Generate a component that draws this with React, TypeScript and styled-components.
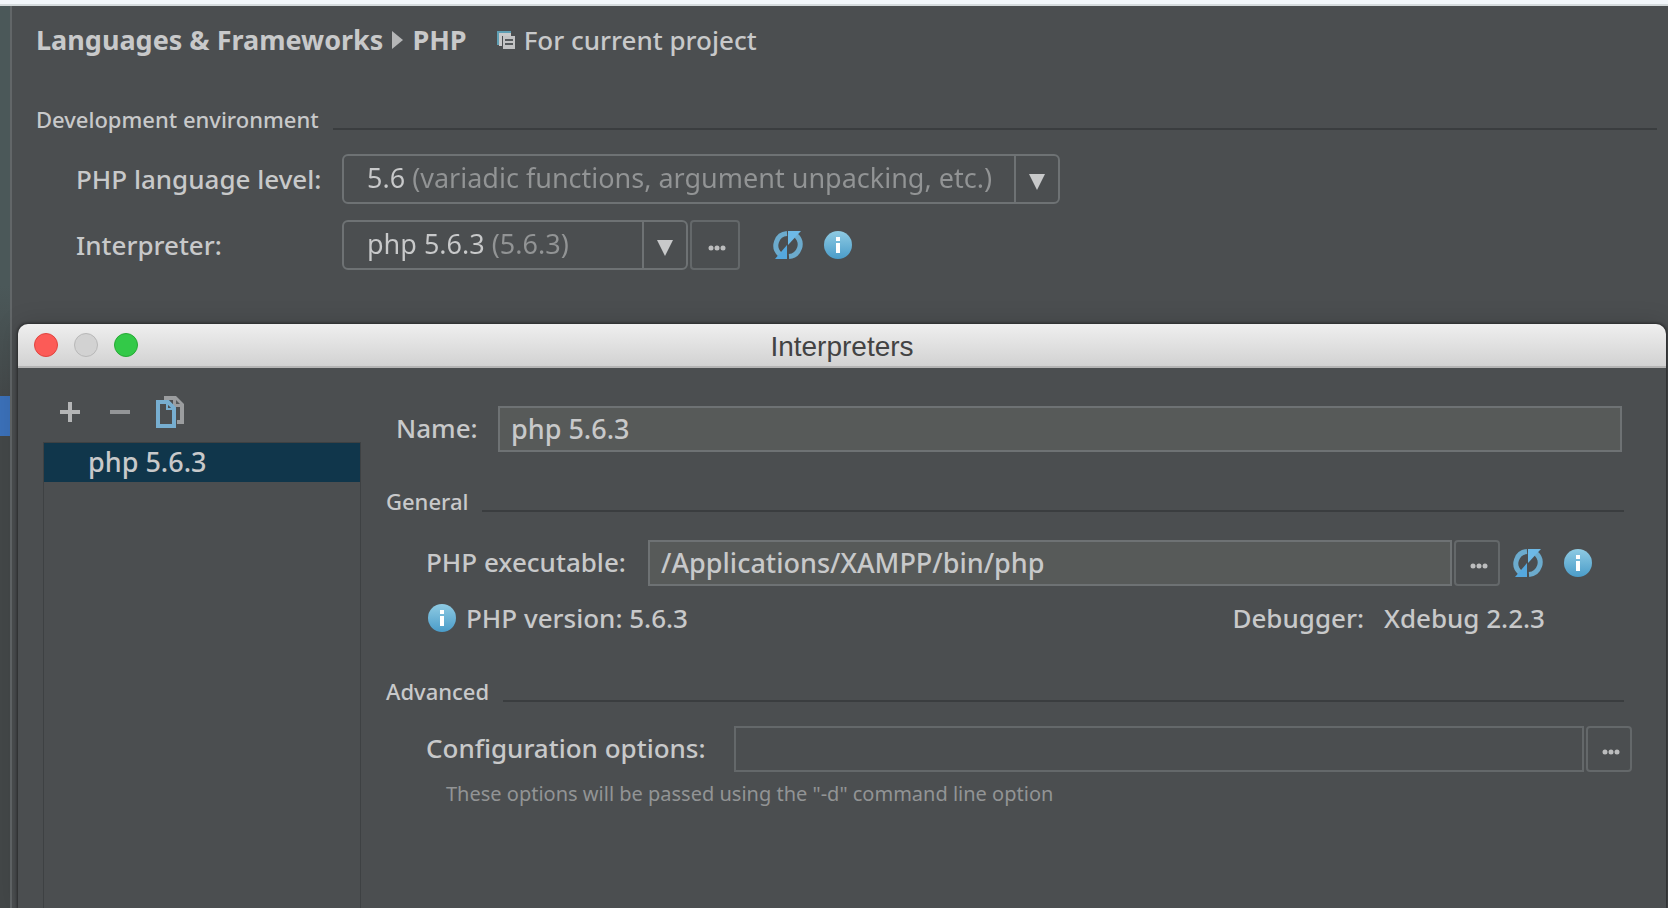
import React, { useId } from "react";
import styled, { createGlobalStyle } from "styled-components";

const color = {
  panel: "#4b4e50",
  text: "#c8c9ca",
  muted: "#929495",
  border: "#6e7274",
  dimBorder: "#64686a",
  field: "#575a59",
  rule: "#3a3d3f",
};

const GlobalStyle = createGlobalStyle`
  *, *::before, *::after { box-sizing: border-box; }
  body {
    margin: 0;
    background: ${color.panel};
    color: ${color.text};
    font-family: "Noto Sans", "Open Sans", sans-serif;
    font-size: 26px;
    font-weight: 500;
    line-height: 36px;
  }
  button, input, select { font: inherit; color: inherit; margin: 0; }
`;

const Page = styled.div`
  display: flex;
  flex-direction: column;
  min-height: 100vh;
  overflow: hidden;
`;

const TopEdge = styled.div`
  flex: none;
  height: 6px;
  background: #f2f6fa;
  border-bottom: 2px solid #d4dadc;
`;

const Body = styled.div`
  display: flex;
  flex: 1;
`;

const Sidebar = styled.div`
  flex: none;
  width: 12px;
  padding-top: 390px;
  background: linear-gradient(#4b5859 0, #4b5859 280px, #434748 400px, #434748);
  border-right: 2px solid #626668;
`;

const SidebarSelection = styled.div`
  height: 40px;
  background: #3b70b8;
`;

const Main = styled.main`
  display: flex;
  flex: 1;
  flex-direction: column;
  min-width: 0;
`;

const Settings = styled.section`
  padding: 15px 11px 54px 24px;
`;

const Breadcrumb = styled.header`
  display: flex;
  align-items: center;
  height: 38px;
`;

const Crumb = styled.h1`
  display: flex;
  align-items: center;
  gap: 9px;
  margin: 0 30px 0 0;
  font-size: 27px;
  font-weight: 700;
`;

const Scope = styled.span`
  display: flex;
  align-items: center;
  gap: 8px;
`;

const SectionTitle = styled.h2<{ $top: number }>`
  display: flex;
  align-items: flex-end;
  gap: 14px;
  margin: ${(p) => p.$top}px 0 0;
  padding-bottom: 2px;
  font-size: 22px;
  font-weight: 500;
  line-height: 30px;

  &::after {
    content: "";
    flex: 1;
    height: 2px;
    margin-bottom: 4px;
    background: ${color.rule};
  }
`;

const SettingRows = styled.div`
  display: grid;
  grid-template-columns: 266px 1fr;
  row-gap: 16px;
  align-items: center;
  padding: 18px 0 0 40px;
`;

const Controls = styled.div`
  display: flex;
  align-items: center;
`;

const Combo = styled.div<{ $width: number }>`
  display: grid;
  grid-template-columns: 1fr 44px;
  width: ${(p) => p.$width}px;
  height: 50px;
  border: 2px solid ${color.border};
  border-radius: 6px;
`;

const ComboSelect = styled.select<{ $split: number }>`
  grid-area: 1 / 1 / 2 / 3;
  appearance: none;
  min-width: 0;
  padding: 0 44px 2px 23px;
  border: 0;
  background: linear-gradient(90deg, ${color.text} ${(p) => p.$split}px, ${color.muted} ${(p) => p.$split}px);
  background-clip: text;
  -webkit-background-clip: text;
  color: transparent;
  font-size: 27px;
  font-weight: 400;
  outline: none;
`;

const ComboArrow = styled.span`
  grid-area: 1 / 2 / 2 / 3;
  display: grid;
  place-items: center;
  padding-top: 6px;
  border-left: 2px solid ${color.border};
  pointer-events: none;
`;

const MoreButton = styled.button<{ $size: number }>`
  display: grid;
  place-items: center;
  flex: none;
  width: ${(p) => p.$size}px;
  height: ${(p) => p.$size}px;
  margin-left: 2px;
  padding: 6px 0 0 4px;
  border: 2px solid ${color.dimBorder};
  border-radius: 4px;
  background: none;
`;

const IconButton = styled.button<{ $gap: number }>`
  display: grid;
  place-items: center;
  flex: none;
  margin-left: ${(p) => p.$gap}px;
  padding: 0;
  border: 0;
  background: none;
`;

const Dialog = styled.section`
  display: flex;
  flex: 1;
  flex-direction: column;
  margin: 0 2px 0 6px;
  border-radius: 10px 10px 0 0;
  background: ${color.panel};
  box-shadow: 0 0 3px 1px rgba(0, 0, 0, 0.45), 0 0 24px rgba(0, 0, 0, 0.16);
`;

const TitleBar = styled.header`
  display: grid;
  grid-template-columns: 1fr auto 1fr;
  align-items: center;
  height: 44px;
  padding: 0 16px;
  border-bottom: 2px solid #b4b4b4;
  border-radius: 10px 10px 0 0;
  background: linear-gradient(#efefef, #d2d2d2);
`;

const WindowButtons = styled.div`
  display: flex;
  gap: 16px;
`;

const WindowButton = styled.button<{ $fill: string; $edge: string }>`
  width: 24px;
  height: 24px;
  padding: 0;
  border: 1px solid ${(p) => p.$edge};
  border-radius: 50%;
  background: ${(p) => p.$fill};
`;

const DialogTitle = styled.h2`
  margin: 0;
  padding-top: 4px;
  color: #434343;
  font-family: "Liberation Sans", Arial, sans-serif;
  font-size: 28px;
  font-weight: 400;
  line-height: 32px;
`;

const DialogBody = styled.div`
  display: flex;
  flex: 1;
`;

const ListPane = styled.div`
  display: flex;
  flex: none;
  flex-direction: column;
  width: 343px;
  padding-left: 25px;
`;

const Toolbar = styled.div`
  display: flex;
  align-items: center;
  height: 74px;
  padding: 14px 0 0 17px;
`;

const List = styled.ul`
  flex: 1;
  margin: 0;
  padding: 0;
  border: 1px solid #3e4143;
  border-bottom: 0;
  list-style: none;
`;

const ListItem = styled.li`
  height: 39px;
  padding-left: 44px;
  background: #10364b;
  font-size: 27px;
  line-height: 38px;
`;

const Form = styled.form`
  flex: 1;
  min-width: 0;
  padding: 38px 42px 0 25px;
`;

const Field = styled.div<{ $indent: number; $top: number; $end: number }>`
  display: flex;
  align-items: center;
  margin-top: ${(p) => p.$top}px;
  padding-left: ${(p) => p.$indent}px;
  padding-right: ${(p) => p.$end}px;
`;

const FieldLabel = styled.label<{ $width: number }>`
  flex: none;
  width: ${(p) => p.$width}px;
  padding-bottom: 2px;
  white-space: nowrap;
`;

const TextInput = styled.input<{ $dim?: boolean }>`
  flex: 1;
  min-width: 0;
  height: 46px;
  padding: 0 11px 2px;
  border: 2px solid ${(p) => (p.$dim ? color.dimBorder : color.border)};
  border-radius: 0;
  background: ${(p) => (p.$dim ? "transparent" : color.field)};
  font-size: 27px;
  outline: none;
`;

const Wide = styled.div`
  margin-right: -8px;
`;

const Versions = styled.div`
  display: flex;
  justify-content: space-between;
  margin: 14px 79px 0 42px;
`;

const VersionItem = styled.span<{ $gap: number }>`
  display: flex;
  align-items: center;
  gap: ${(p) => p.$gap}px;
`;

const Hint = styled.p`
  margin: 8px 0 0 60px;
  color: ${color.muted};
  font-size: 20px;
  font-weight: 400;
  line-height: 28px;
`;

function InfoIcon() {
  const id = useId();
  return (
    <svg width="28" height="28" viewBox="0 0 28 28" aria-hidden="true">
      <defs>
        <linearGradient id={id} x1="0" y1="0" x2="0" y2="1">
          <stop offset="0" stopColor="#8fcbe3" />
          <stop offset="1" stopColor="#4a9cc9" />
        </linearGradient>
      </defs>
      <circle cx="14" cy="14" r="14" fill={`url(#${id})`} />
      <rect x="12" y="6" width="4" height="4" fill="#fff" />
      <rect x="12" y="12" width="4" height="10" fill="#fff" />
    </svg>
  );
}

function RefreshIcon() {
  return (
    <svg width="30" height="28" viewBox="0 0 30 28" aria-hidden="true">
      <path d="M14 2.500A12 12 0 0 0 7 23.500" fill="none" stroke="#6cabcd" strokeWidth="5" />
      <path d="M14 14V28H2Z" fill="#55a8de" />
      <path d="M16 25.500A12 12 0 0 0 23 4.500" fill="none" stroke="#6cabcd" strokeWidth="5" />
      <path d="M15 14V0H28Z" fill="#6db9e6" />
    </svg>
  );
}

function ScopeIcon() {
  return (
    <svg width="19" height="19" viewBox="0 0 19 19" aria-hidden="true">
      <path d="M0 0H14V3H3V14H0Z" fill="#5f9fb4" />
      <path d="M2 2H14V5H5V15H2Z" fill="#c8c9ca" />
      <path d="M6 5H18V18H6Z" fill="#c2c3c4" />
      <path d="M8 9H16M8 13H16" stroke="#55595b" strokeWidth="2" />
    </svg>
  );
}

function CrumbArrow() {
  return (
    <svg width="11" height="18" viewBox="0 0 11 18" aria-hidden="true">
      <path d="M0 0L11 9L0 18Z" fill="#b5b6b7" />
    </svg>
  );
}

function DownArrow() {
  return (
    <svg width="16" height="16" viewBox="0 0 16 16" aria-hidden="true">
      <path d="M0 0H16L8 16Z" fill={color.text} />
    </svg>
  );
}

function DotsIcon() {
  return (
    <svg width="18" height="6" viewBox="0 0 18 6" aria-hidden="true">
      <g fill="#bcbdbe">
        <circle cx="3" cy="3" r="2.500" />
        <circle cx="9" cy="3" r="2.500" />
        <circle cx="15" cy="3" r="2.500" />
      </g>
    </svg>
  );
}

function PlusIcon() {
  return (
    <svg width="20" height="20" viewBox="0 0 20 20" aria-hidden="true">
      <path d="M10 0V20M0 10H20" stroke="#b4b5b6" strokeWidth="4" />
    </svg>
  );
}

function MinusIcon() {
  return (
    <svg width="20" height="20" viewBox="0 0 20 20" aria-hidden="true">
      <path d="M0 10H20" stroke="#939597" strokeWidth="4" />
    </svg>
  );
}

function CopyIcon() {
  return (
    <svg width="28" height="32" viewBox="0 0 28 32" aria-hidden="true">
      <path d="M8 0H20L28 8V28H21V24H24V11H17V4H8Z" fill="#9b9d9f" />
      <path d="M20 4V8H24Z" fill="#55595b" />
      <path d="M2 6H12L18 12V30H2Z" fill={color.panel} stroke="#77aed0" strokeWidth="4" />
      <path d="M11 5V13H19" fill="none" stroke="#77aed0" strokeWidth="2" />
    </svg>
  );
}

export default function App() {
  return (
    <Page>
      <GlobalStyle />
      <TopEdge />
      <Body>
        <Sidebar>
          <SidebarSelection />
        </Sidebar>
        <Main>
          <Settings>
            <Breadcrumb>
              <Crumb>
                Languages &amp; Frameworks
                <CrumbArrow />
                PHP
              </Crumb>
              <Scope>
                <ScopeIcon />
                For current project
              </Scope>
            </Breadcrumb>

            <SectionTitle $top={45}>Development environment</SectionTitle>
            <SettingRows>
              <label htmlFor="level">PHP language level:</label>
              <Controls>
                <Combo $width={718}>
                  <ComboSelect id="level" $split={66}>
                    <option>5.6 (variadic functions, argument unpacking, etc.)</option>
                  </ComboSelect>
                  <ComboArrow>
                    <DownArrow />
                  </ComboArrow>
                </Combo>
              </Controls>
              <label htmlFor="interpreter">Interpreter:</label>
              <Controls>
                <Combo $width={346}>
                  <ComboSelect id="interpreter" $split={144}>
                    <option>php 5.6.3 (5.6.3)</option>
                  </ComboSelect>
                  <ComboArrow>
                    <DownArrow />
                  </ComboArrow>
                </Combo>
                <MoreButton $size={50} type="button" aria-label="Browse interpreters">
                  <DotsIcon />
                </MoreButton>
                <IconButton $gap={33} type="button" aria-label="Reload">
                  <RefreshIcon />
                </IconButton>
                <IconButton $gap={21} type="button" aria-label="Info">
                  <InfoIcon />
                </IconButton>
              </Controls>
            </SettingRows>
          </Settings>

          <Dialog role="dialog" aria-labelledby="dialog-title">
            <TitleBar>
              <WindowButtons>
                <WindowButton $fill="#fc5b57" $edge="#e0443f" aria-label="Close" />
                <WindowButton $fill="#d2d2d2" $edge="#b8b8b8" aria-label="Minimize" />
                <WindowButton $fill="#33c948" $edge="#26a934" aria-label="Zoom" />
              </WindowButtons>
              <DialogTitle id="dialog-title">Interpreters</DialogTitle>
            </TitleBar>
            <DialogBody>
              <ListPane>
                <Toolbar>
                  <IconButton $gap={0} aria-label="Add">
                    <PlusIcon />
                  </IconButton>
                  <IconButton $gap={30} aria-label="Remove">
                    <MinusIcon />
                  </IconButton>
                  <IconButton $gap={26} aria-label="Copy">
                    <CopyIcon />
                  </IconButton>
                </Toolbar>
                <List>
                  <ListItem>php 5.6.3</ListItem>
                </List>
              </ListPane>
              <Form onSubmit={(e) => e.preventDefault()}>
                <Field $indent={10} $top={0} $end={2}>
                  <FieldLabel $width={102} htmlFor="name">Name:</FieldLabel>
                  <TextInput id="name" defaultValue="php 5.6.3" />
                </Field>

                <SectionTitle $top={34}>General</SectionTitle>
                <Field $indent={40} $top={22} $end={32}>
                  <FieldLabel $width={222} htmlFor="executable">PHP executable:</FieldLabel>
                  <TextInput id="executable" defaultValue="/Applications/XAMPP/bin/php" />
                  <MoreButton $size={46} type="button" aria-label="Browse executable">
                    <DotsIcon />
                  </MoreButton>
                  <IconButton $gap={13} type="button" aria-label="Reload">
                    <RefreshIcon />
                  </IconButton>
                  <IconButton $gap={21} type="button" aria-label="Info">
                    <InfoIcon />
                  </IconButton>
                </Field>
                <Versions>
                  <VersionItem $gap={10}>
                    <InfoIcon />
                    PHP version: 5.6.3
                  </VersionItem>
                  <VersionItem $gap={20}>
                    <span>Debugger:</span>
                    <span>Xdebug 2.2.3</span>
                  </VersionItem>
                </Versions>

                <SectionTitle $top={40}>Advanced</SectionTitle>
                <Wide>
                  <Field $indent={40} $top={18} $end={0}>
                    <FieldLabel $width={308} htmlFor="options">Configuration options:</FieldLabel>
                    <TextInput id="options" $dim />
                    <MoreButton $size={46} type="button" aria-label="Edit options">
                      <DotsIcon />
                    </MoreButton>
                  </Field>
                </Wide>
                <Hint>These options will be passed using the "-d" command line option</Hint>
              </Form>
            </DialogBody>
          </Dialog>
        </Main>
      </Body>
    </Page>
  );
}
